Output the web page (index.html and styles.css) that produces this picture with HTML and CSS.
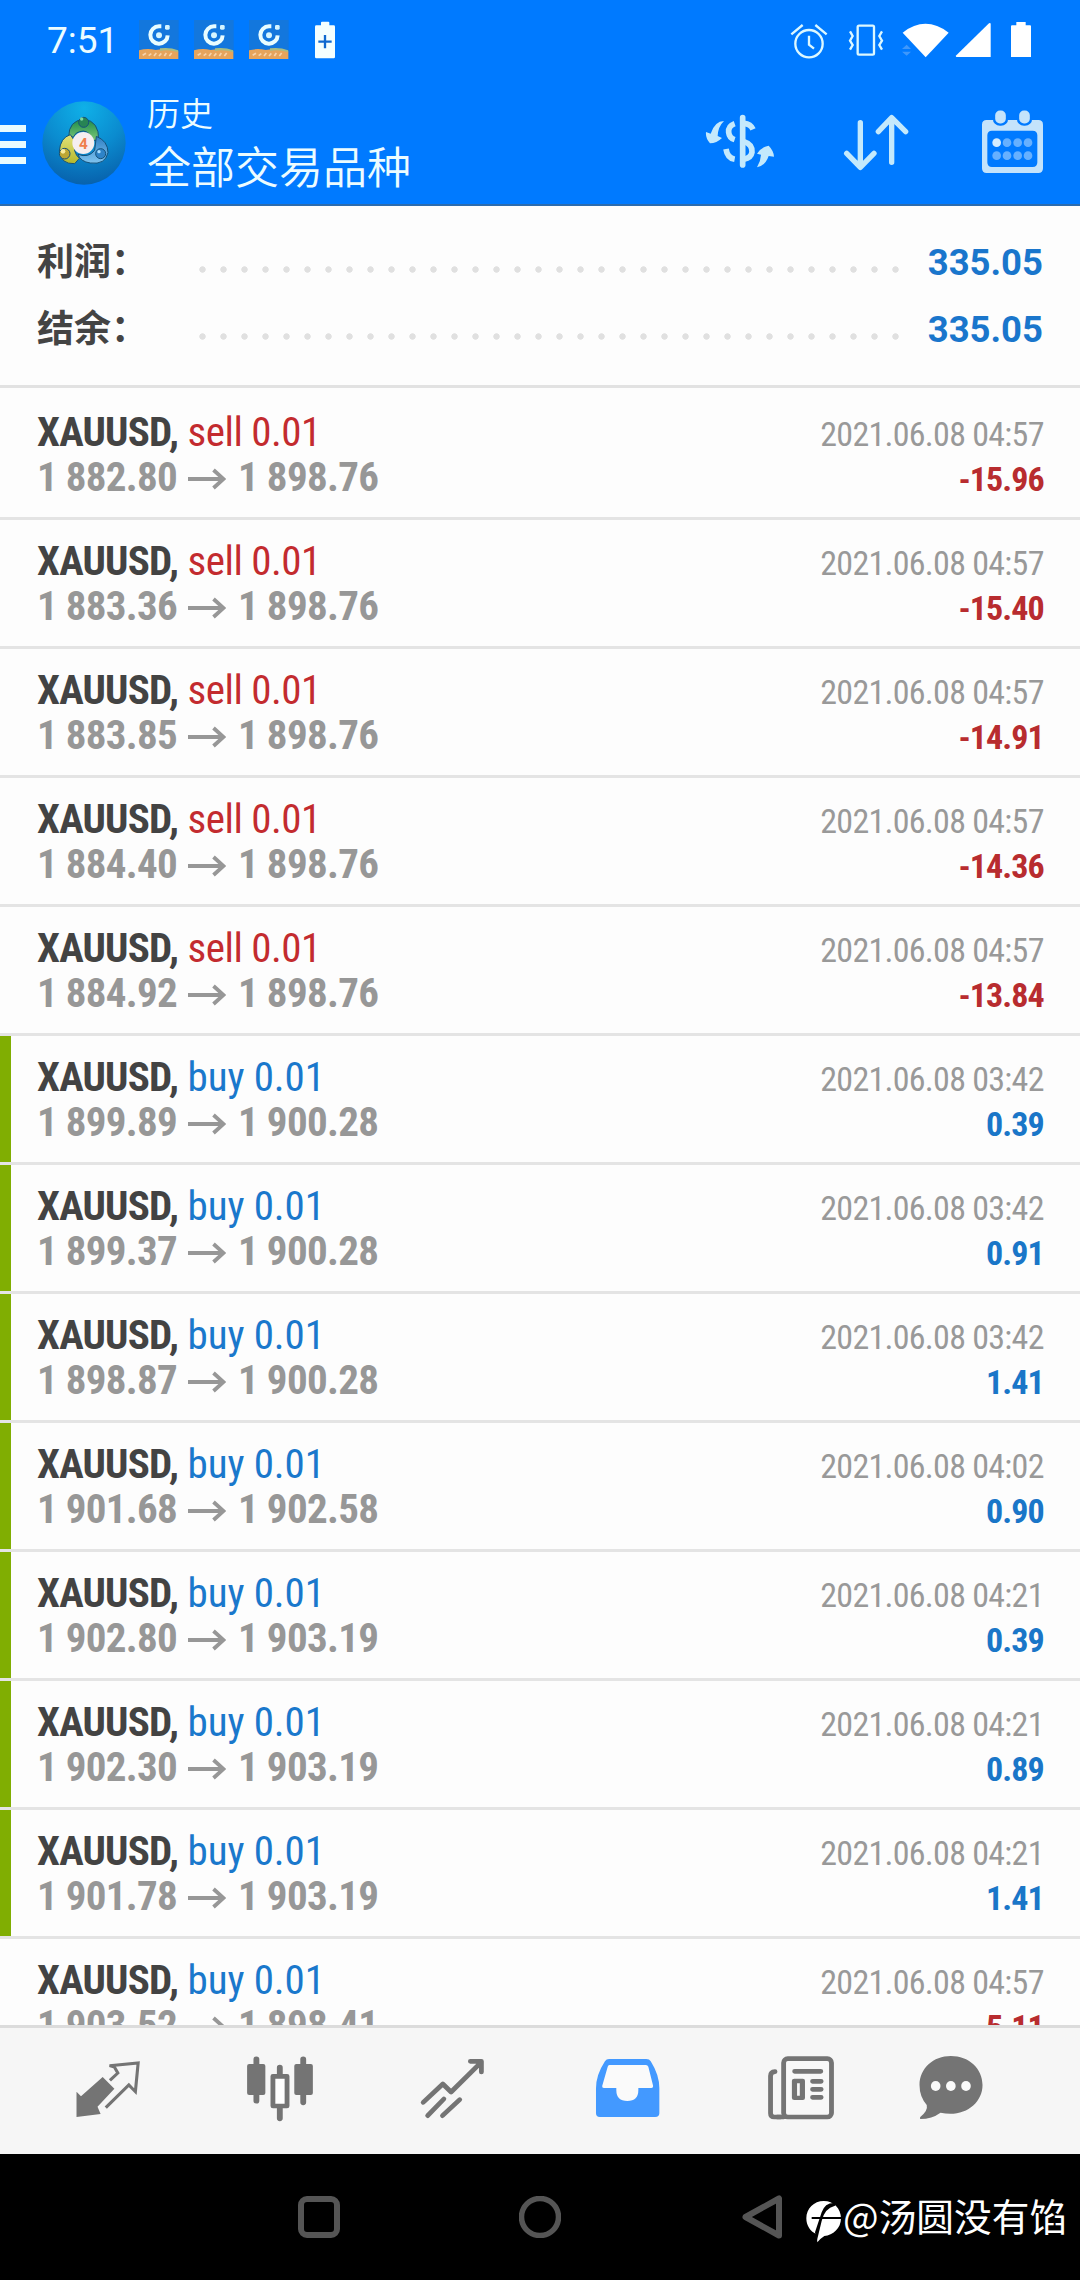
FILE: index.html
```html
<!DOCTYPE html>
<html lang="zh-CN">
<head>
<meta charset="utf-8">
<title>历史</title>
<link rel="stylesheet" href="styles.css">
</head>
<body>
<svg width="0" height="0" class="defs">
  <symbol id="app" viewBox="417 60 120 120" preserveAspectRatio="none">
    <rect x="417" y="60" width="119" height="117" fill="#1377dd"/>
    <path d="M417 151q25-7 50-1q40-7 68 2v25H417z" fill="#e6a45c"/>
    <path d="M480 145q30-4 54 6v5q-30-8-54-3z" fill="#a5bd86"/>
    <path d="M428 166l10-6M446 167l8-6M462 168l7-9M477 168l7-8M493 168l6-9M508 168l7-9" stroke="#f6d3ac" stroke-width="5"/>
    <path d="M484 79H477A26 26 0 1 0 503 106" fill="none" stroke="#e9fdff" stroke-width="12"/>
    <circle cx="477" cy="106" r="9" fill="#d5f5ff"/><rect x="495" y="75" width="14" height="14" rx="4" fill="#d5f5ff"/>
  </symbol>
  <symbol id="arrow" viewBox="0 0 38 22"><path d="M0 11H36M25.500 2L35.500 11L25.500 20" fill="none" stroke="#979797" stroke-width="3.800"/></symbol>
</svg>
<header>
  <div class="status">
    <span class="clock">7:51</span>
    <svg class="s-app" width="40" height="40"><use href="#app"/></svg>
    <svg class="s-app" width="40" height="40"><use href="#app"/></svg>
    <svg class="s-app" width="40" height="40"><use href="#app"/></svg>
    <svg class="s-saver" width="22" height="40" viewBox="939 60 66 120"><path d="M946 76h14v-8q0-3 3-3h19q3 0 3 3v8h13q4 0 4 4v91q0 4-4 4h-52q-4 0-4-4V80q0-4 4-4z" fill="#f4ffff"/><path d="M972 105v40M952 125h40" stroke="#1069cf" stroke-width="7"/></svg>
    <svg class="s-alarm" width="38" height="40" viewBox="328 60 114 120" fill="none" stroke="#dcf8ff" stroke-width="7"><circle cx="385" cy="131" r="41"/><path d="M385 107v27l15 12M332 103l34-28M438 103l-34-28"/></svg>
    <svg class="s-vib" width="36" height="40" viewBox="500 60 108 120" fill="none" stroke="#dcf8ff" stroke-width="7"><rect x="529" y="77" width="49" height="87" rx="4"/><path d="M506 94l8 14-8 14 8 13-8 14M602 94l-8 14 8 14-8 13 8 14"/></svg>
    <svg class="s-wifi" width="48" height="40" viewBox="663 60 144 120"><path d="M668 98Q736 45 806 98L737 172Z" fill="#fff"/><path d="M666 147l14-13 13 13zM666 155h27l-13 12z" fill="#3f98fb"/></svg>
    <svg class="s-sig" width="36" height="40" viewBox="826 60 108 120"><path d="M933 71V171H830Q827 169 830 166L928 70Q932 67 933 71Z" fill="#fff"/></svg>
    <svg class="s-bat" width="20" height="40" viewBox="993 60 60 120"><path d="M996 76h13V66h28v10h13q3 0 3 3v92h-60V79q0-3 3-3z" fill="#fff"/></svg>
  </div>
  <div class="toolbar">
    <div class="menu"><i></i><i></i><i></i></div>
    <svg class="avatar" width="84" height="84" viewBox="0 0 252 252">
      <defs>
        <radialGradient id="bg" cx=".5" cy=".08" r="1"><stop offset="0" stop-color="#0fb0e8"/><stop offset=".5" stop-color="#0b8bcf"/><stop offset="1" stop-color="#075aa6"/></radialGradient>
        <linearGradient id="g" x2="0" y2="1"><stop stop-color="#1c8a4a"/><stop offset="1" stop-color="#7cc878"/></linearGradient>
        <linearGradient id="y" x2="0" y2="1"><stop stop-color="#e3e27a"/><stop offset="1" stop-color="#b5b82c"/></linearGradient>
        <linearGradient id="b" x2="0" y2="1"><stop stop-color="#2f7fc4"/><stop offset="1" stop-color="#7fc4ef"/></linearGradient>
      </defs>
      <circle cx="126" cy="126" r="125" fill="url(#bg)"/>
      <g stroke="#15517a" stroke-width="3">
        <path d="M80 108Q80 58 126 55Q172 60 170 118L150 118Q145 92 124 90Q100 92 95 108Z" fill="url(#g)"/>
        <path d="M85 101Q55 110 52 150Q56 190 98 188L112 172Q92 155 98 120Z" fill="url(#y)"/>
        <path d="M163 106Q198 120 198 155Q190 192 145 186Q115 182 108 160Q140 172 158 148Z" fill="url(#b)"/>
        <circle cx="125" cy="64" r="15" fill="#278454"/><circle cx="68" cy="158" r="16" fill="#bca634"/><circle cx="176" cy="158" r="15" fill="#2e83c8"/>
      </g>
      <circle cx="119" cy="54" r="5" fill="#7dd8a0"/><circle cx="63" cy="151" r="7" fill="#f8eb9c"/><circle cx="171" cy="152" r="5" fill="#a7dcff"/>
      <circle cx="124" cy="126" r="33" fill="#f5eef0"/>
      <text x="124" y="145" text-anchor="middle" class="four">4</text>
    </svg>
    <div class="titles"><div class="sub">历史</div><div class="title">全部交易品种</div></div>
    <svg class="t-dollar" width="74" height="124" viewBox="69 240 222 372" fill="none" stroke="#c4e9fc" stroke-width="17">
      <path d="M188 353V495" stroke-linecap="round"/><path d="M164 371Q144 378 146 397Q148 414 164 419M138 447Q142 474 164 478M192 370Q212 372 219 388M192 425Q218 433 216 457Q213 474 192 478" />
      <path d="M132 363Q105 363 92 401L78 396Q76 414 90 430Q110 430 126 414L113 408Q114 380 132 363ZM231 502Q242 484 243 464L231 461Q243 441 266 437Q281 452 282 470L266 468Q256 497 231 502Z" fill="#c4e9fc" stroke="none"/></svg>
    <svg class="t-sort" width="68" height="124" viewBox="486 240 204 372" fill="none" stroke="#c4e9fc" stroke-width="16" stroke-linecap="round" stroke-linejoin="round"><path d="M541 368V501M500 460L541 502L582 460M635 487V354M595 395L635 353L677 395"/></svg>
    <svg class="t-cal" width="64" height="124" viewBox="900 240 192 372">
      <path fill-rule="evenodd" d="M920 360H1075Q1089 360 1089 374V505Q1089 519 1075 519H920Q906 519 906 505V374Q906 360 920 360ZM936 392Q922 392 922 406V487Q922 501 936 501H1058Q1072 501 1072 487V406Q1072 392 1058 392Z" fill="#c4e3fb"/>
      <g fill="#c4e3fb" stroke="#007aff" stroke-width="7"><rect x="942" y="328" width="39" height="46" rx="18"/><rect x="1014" y="328" width="39" height="46" rx="18"/></g>
      <circle cx="950" cy="428" r="13" fill="#d4ecff"/><g fill="#66b0ff"><circle cx="981" cy="428" r="13"/><circle cx="1013" cy="428" r="13"/><circle cx="1044" cy="428" r="13"/><circle cx="950" cy="467" r="13"/><circle cx="981" cy="467" r="13"/><circle cx="1013" cy="467" r="13"/><circle cx="1044" cy="467" r="13"/></g></svg>
  </div>
</header>
<section class="summary">
  <div><b>利润：</b><i class="dots"></i><strong>335.05</strong></div>
  <div><b>结余：</b><i class="dots"></i><strong>335.05</strong></div>
</section>
<main>
  <article><div><p><b>XAUUSD,</b> <span class="sell">sell 0.01</span></p><time>2021.06.08 04:57</time></div><div><p class="price">1 882.80<svg><use href="#arrow"/></svg>1 898.76</p><em class="loss">-15.96</em></div></article>
  <article><div><p><b>XAUUSD,</b> <span class="sell">sell 0.01</span></p><time>2021.06.08 04:57</time></div><div><p class="price">1 883.36<svg><use href="#arrow"/></svg>1 898.76</p><em class="loss">-15.40</em></div></article>
  <article><div><p><b>XAUUSD,</b> <span class="sell">sell 0.01</span></p><time>2021.06.08 04:57</time></div><div><p class="price">1 883.85<svg><use href="#arrow"/></svg>1 898.76</p><em class="loss">-14.91</em></div></article>
  <article><div><p><b>XAUUSD,</b> <span class="sell">sell 0.01</span></p><time>2021.06.08 04:57</time></div><div><p class="price">1 884.40<svg><use href="#arrow"/></svg>1 898.76</p><em class="loss">-14.36</em></div></article>
  <article><div><p><b>XAUUSD,</b> <span class="sell">sell 0.01</span></p><time>2021.06.08 04:57</time></div><div><p class="price">1 884.92<svg><use href="#arrow"/></svg>1 898.76</p><em class="loss">-13.84</em></div></article>
  <article class="tp"><div><p><b>XAUUSD,</b> <span class="buy">buy 0.01</span></p><time>2021.06.08 03:42</time></div><div><p class="price">1 899.89<svg><use href="#arrow"/></svg>1 900.28</p><em>0.39</em></div></article>
  <article class="tp"><div><p><b>XAUUSD,</b> <span class="buy">buy 0.01</span></p><time>2021.06.08 03:42</time></div><div><p class="price">1 899.37<svg><use href="#arrow"/></svg>1 900.28</p><em>0.91</em></div></article>
  <article class="tp"><div><p><b>XAUUSD,</b> <span class="buy">buy 0.01</span></p><time>2021.06.08 03:42</time></div><div><p class="price">1 898.87<svg><use href="#arrow"/></svg>1 900.28</p><em>1.41</em></div></article>
  <article class="tp"><div><p><b>XAUUSD,</b> <span class="buy">buy 0.01</span></p><time>2021.06.08 04:02</time></div><div><p class="price">1 901.68<svg><use href="#arrow"/></svg>1 902.58</p><em>0.90</em></div></article>
  <article class="tp"><div><p><b>XAUUSD,</b> <span class="buy">buy 0.01</span></p><time>2021.06.08 04:21</time></div><div><p class="price">1 902.80<svg><use href="#arrow"/></svg>1 903.19</p><em>0.39</em></div></article>
  <article class="tp"><div><p><b>XAUUSD,</b> <span class="buy">buy 0.01</span></p><time>2021.06.08 04:21</time></div><div><p class="price">1 902.30<svg><use href="#arrow"/></svg>1 903.19</p><em>0.89</em></div></article>
  <article class="tp"><div><p><b>XAUUSD,</b> <span class="buy">buy 0.01</span></p><time>2021.06.08 04:21</time></div><div><p class="price">1 901.78<svg><use href="#arrow"/></svg>1 903.19</p><em>1.41</em></div></article>
  <article><div><p><b>XAUUSD,</b> <span class="buy">buy 0.01</span></p><time>2021.06.08 04:57</time></div><div><p class="price">1 903.52<svg><use href="#arrow"/></svg>1 898.41</p><em class="loss">-5.11</em></div></article>
</main>
<nav class="tabs">
  <a><svg viewBox="210.800 165 203.300 201" preserveAspectRatio="none"><path d="M297 231L331 266L282 320L291 342L221 351V275L234 289Z" fill="#747474"/><path d="M318 241L341 219L331 201L317 197L400 189L392 275L373 255L306 323" fill="none" stroke="#747474" stroke-width="9"/></svg></a>
  <a><svg viewBox="714.800 165 203.300 201" preserveAspectRatio="none" stroke="#747474" fill="#747474" stroke-linecap="round"><path d="M745 178V302M881 178V307M813 203V222M813 325V355" stroke-width="17"/><rect x="718" y="192" width="53" height="93" rx="6" stroke="none"/><rect x="855" y="192" width="54" height="93" rx="6" stroke="none"/><rect x="793" y="229" width="41" height="89" fill="#fff" stroke-width="14" stroke-linejoin="round"/></svg></a>
  <a><svg viewBox="1217.800 165 203.300 201" preserveAspectRatio="none" fill="none" stroke="#747474" stroke-width="14" stroke-linejoin="round"><path d="M1230 307L1287 252L1311 276L1398 187M1367 184H1399V216M1243 347L1290 297M1286 347L1336 299" stroke-linecap="round"/></svg></a>
  <a><svg viewBox="153.300 165 203.300 201" preserveAspectRatio="none"><path d="M200 177H308Q317 177 321 184Q346 225 346 265V340Q346 351 334 351H173Q162 351 162 340V265Q162 225 188 184Q192 177 200 177Z" fill="#4399ff"/><path d="M201 195H307Q312 195 314 200L328 258Q328 264 323 264H285V270Q285 303 253 303Q221 303 221 270V264H185Q179 264 180 258L196 200Q197 195 201 195Z" fill="#fafafa"/></svg></a>
  <a><svg viewBox="657.800 165 203.300 201" preserveAspectRatio="none" fill="none" stroke="#747474" stroke-width="14" stroke-linecap="round"><path d="M700 351H682Q671 351 671 340V228Q671 216 684 215" /><rect x="709" y="176" width="139" height="175" rx="12" fill="#f8f8f8"/><path d="M709 351H690M741 214H817M793 244H818M793 268H818M793 292H818"/><path fill="#747474" fill-rule="evenodd" stroke="none" d="M740 236H765Q771 236 771 242V294Q771 300 765 300H740Q733 300 733 294V242Q733 236 740 236ZM748 250V287H756V250Z"/></svg></a>
  <a><svg viewBox="1091.800 165 203.300 201" preserveAspectRatio="none"><path d="M1193 168C1245 168 1285 205 1285 255C1285 312 1230 354 1163 338Q1138 357 1104 357Q1102 353 1105 350Q1127 332 1123 315Q1102 290 1102 255C1102 205 1142 168 1193 168Z" fill="#747474"/><g fill="#fafafa"><ellipse cx="1149" cy="258" rx="14" ry="15"/><ellipse cx="1193" cy="258" rx="14" ry="15"/><ellipse cx="1237" cy="258" rx="14" ry="15"/></g></svg></a>
</nav>
<footer>
  <svg class="recent" width="42" height="42"><rect x="3" y="3" width="36" height="36" rx="6" fill="none" stroke="#555" stroke-width="6"/></svg>
  <svg class="home" width="42" height="42"><circle cx="21" cy="21" r="18.500" fill="none" stroke="#555" stroke-width="5.500"/></svg>
  <svg class="back" width="40" height="44"><path d="M37 3.500V40.500L3.500 22Z" fill="none" stroke="#555" stroke-width="6" stroke-linejoin="round"/></svg>
  <svg class="mark" width="37" height="45" viewBox="30 25 111 135"><path d="M86 34C116 34 138 57 138 86C138 116 114 137 88 139Q78 145 67 158L65 134C46 126 34 108 34 86C34 57 57 34 86 34Z" fill="#fff"/><path d="M120 40Q90 38 80 68L60 128L66 152L80 94Q88 56 120 48Z"/><path d="M50 82H138V88H50Z"/></svg>
  <span class="author">@汤圆没有馅</span>
</footer>
</body>
</html>
```
FILE: styles.css
```css
* { box-sizing: border-box; margin: 0; padding: 0; }
body { width: 1080px; height: 2280px; overflow: hidden; display: flex; flex-direction: column; background: #fdfdfd; font-family: Roboto, "Noto Sans CJK SC", sans-serif; }
svg { display: block; flex: none; }
i, em { font-style: normal; }
.defs { display: none; }

header { height: 206px; background: #007aff; border-bottom: 2px solid #2c6cae; color: #ecfcff; }
.status { height: 80px; display: flex; align-items: center; }
.clock { margin-left: 47px; width: 76px; font-size: 37px; line-height: 40px; white-space: nowrap; padding-top: 2px; }
.s-app { margin-left: 16px; margin-right: -1px; }
.s-saver { margin-left: 26px; }
.s-alarm { margin-left: auto; }
.s-vib { margin-left: 20px; }
.s-wifi { margin-left: 17px; }
.s-sig { margin-left: 6px; }
.s-bat { margin-left: 20px; margin-right: 49px; }

.toolbar { height: 124px; display: flex; align-items: center; }
.menu { width: 26px; display: flex; flex-direction: column; gap: 9px; padding-top: 5px; }
.menu i { height: 7px; background: #e8fbff; }
.avatar { margin-left: 16px; margin-top: 2px; }
.four { font: 700 46px Roboto, sans-serif; fill: #ef7f4c; }
.titles { margin-left: 21px; }
.sub { font-size: 33px; line-height: 46px; }
.title { font-size: 44px; line-height: 60px; }
.sub, .title { font-family: "Noto Sans CJK SC", sans-serif; font-weight: 350; }
.t-dollar { margin-left: auto; }
.t-sort { margin-left: 65px; }
.t-cal { margin-left: 70px; margin-right: 36px; }

.summary { flex: none; height: 182px; padding: 22px 37px 0; border-bottom: 3px solid #e2e2e2; }
.summary div { height: 67px; display: flex; align-items: center; }
.summary b { width: 155px; font: 700 37px/67px "Noto Sans CJK SC", sans-serif; color: #444; white-space: nowrap; padding-bottom: 4px; }
.dots { width: 714px; height: 7px; margin-top: 16px; background: radial-gradient(circle at center, #e0e0e0 2.800px, transparent 3.600px) 0 0 / 21px 7px; }
.summary strong { margin-left: auto; font-size: 36.500px; color: #1a76cc; padding-top: 1px; }

main { flex: none; height: 1637px; padding-top: 3px; overflow: hidden; }
article { height: 129px; padding: 19px 37px 0 37px; border-bottom: 3px solid #e4e4e4; font: 400 41px/45px "Roboto Condensed", Roboto, sans-serif; }
article.tp { background: linear-gradient(#80ae02, #80ae02) 0 0 / 11px 126px no-repeat; background-clip: padding-box; }
article > div { height: 45px; display: flex; justify-content: space-between; align-items: baseline; white-space: nowrap; }
article b { color: #434343; letter-spacing: -.8px; }
.sell { color: #c32b2f; letter-spacing: -.5px; }
.buy { color: #1a78cc; letter-spacing: -.1px; }
.price { display: flex; color: #979797; font-weight: 700; letter-spacing: -.7px; }
.price svg { width: 38px; height: 22px; margin: 13px 12px 0 11px; }
time { font-size: 34px; color: #999; letter-spacing: -.73px; margin-right: -.7px; }
em { font-size: 34px; font-weight: 700; color: #1a76c8; letter-spacing: -.9px; margin-right: -.9px; }
em.loss { color: #b82c2f; }

.tabs { flex: none; height: 129px; border-top: 3px solid #dcdcdc; background: #f6f6f6; display: flex; align-items: center; padding: 0 66px 5px 21px; }
.tabs a { flex: none; width: 173.400px; display: flex; justify-content: center; }
.tabs a:last-child { width: 126px; }
.tabs svg { width: 70px; height: 67px; }

footer { flex: none; height: 126px; background: #000; display: flex; align-items: center; }
.recent { margin-left: 298px; }
.home { margin-left: 179px; }
.back { margin-left: 181px; }
.mark { margin-left: 23px; margin-top: 7px; }
.author { margin-left: 1px; font: 400 37.700px/50px "Noto Sans CJK SC", sans-serif; color: #fff; white-space: nowrap; padding-bottom: 4px; }
```
